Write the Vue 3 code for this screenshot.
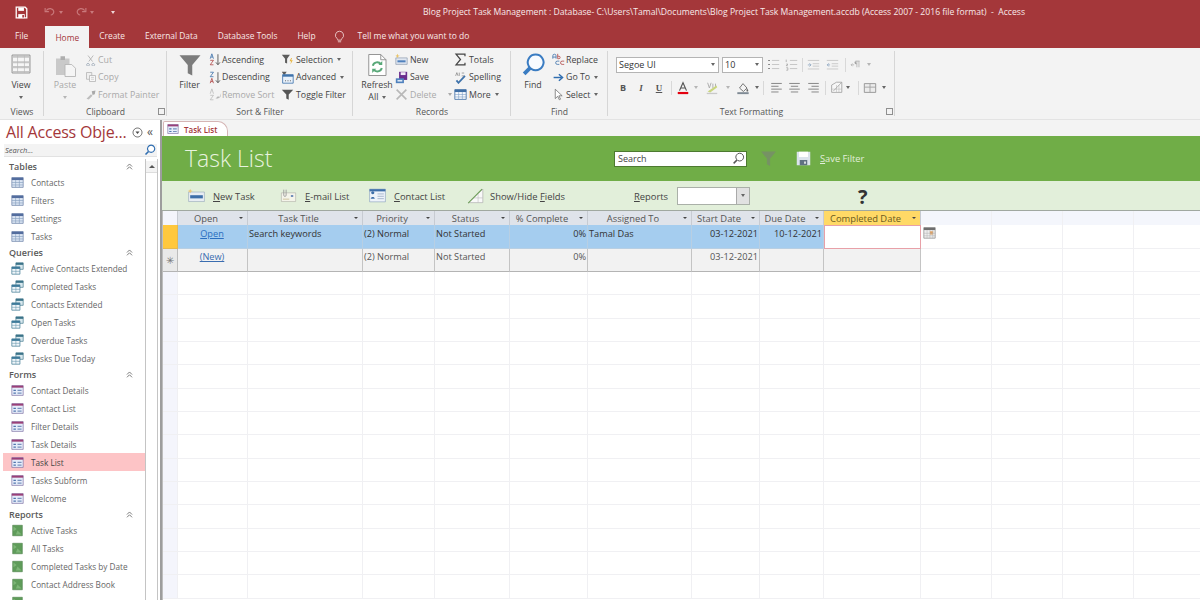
<script setup>
import { h } from 'vue'

const icons = {
  save: [['M1.5 1.5h11l2 2v11h-13z', 'none', '#fff', 1.6], ['M4 2h7v4H4z', '#fff'], ['M4 10h8v5H4z', '#fff'], ['M9 11h2v3H9z', '#a4373a']],
  undo: [['M3 6c3-4 9-3 10 1 .4 3-2 5-4 5', 'none', '#c9797b', 1.5], ['M1.5 2.5v5h5', 'none', '#c9797b', 1.5]],
  redo: [['M13 6C10 2 4 3 3 7c-.4 3 2 5 4 5', 'none', '#c9797b', 1.5], ['M14.5 2.5v5h-5', 'none', '#c9797b', 1.5]],
  bulb: [['M8 1.5a5 5 0 0 1 3 9c-.6.6-.8 1.2-.8 2H5.800c0-.8-.2-1.400-.8-2a5 5 0 0 1 3-9z', 'none', '#f4dcdc', 1], ['M6 14.500h4', 'none', '#f4dcdc', 1]],
  view: [['M1.500 1.500h13v13h-13z', '#f6f6f6', '#8a8a8a', .7], ['M2 2h12v1.500H2zM2 6h12v1.500H2zM2 9.500h12V11H2zM2 13h12v1.200H2z', '#c6c6c6'], ['M5.500 1.500v13M10.500 1.500v13', 'none', '#b8b8b8', .5]],
  paste: [['M2 3h9v11H2z', '#c9c9c9'], ['M5 1.500h3v2.500H5z', '#aeaeae'], ['M8 7h4.500L15 9.500V15H8z', '#f5f5f5', '#b5b5b5', .6]],
  cut: [['M4 2l6 8M11 2l-6 8', 'none', '#a8a8a8', 1], ['M4 12.500a1.800 1.800 0 1 0 .1 0zM11 12.500a1.800 1.800 0 1 0 .1 0z', 'none', '#9aa7b5', 1.2]],
  copy: [['M2 2h7v9H2z', '#efefef', '#b0b0b0', 1], ['M6 6h8v8H6z', '#f7f7f7', '#b0b0b0', 1], ['M8 8.500h4M8 11h4', 'none', '#c5c5c5', 1]],
  painter: [['M2 13l6-6 2 2-5 5z', '#bdbdbd'], ['M9 3l5-1-1 5-3 1z', '#a9a9a9']],
  funnel: [['M1 1.500h14L9.500 8v7l-3-1.500V8z', '#7c7c7c']],
  az: [['M1.500 7l2-6 2 6M2.300 5h2.500', 'none', '#3f73ab', 1], ['M1.500 9h4l-4 5.500h4', 'none', '#b04848', 1], ['M11 1.500V14M8.500 11.500l2.500 3 2.500-3', 'none', '#444', 1]],
  za: [['M1.500 1.500h4l-4 5.500h4', 'none', '#3f73ab', 1], ['M1.500 15l2-6 2 6M2.300 13h2.500', 'none', '#b04848', 1], ['M11 1.500V14M8.500 11.500l2.500 3 2.500-3', 'none', '#444', 1]],
  rmsort: [['M1.500 7l2-6 2 6', 'none', '#bdbdbd', 1], ['M1.500 9h4l-4 5.500h4', 'none', '#bdbdbd', 1], ['M8 13l3-3 2 1 2-5-1 5-3 2z', '#b5b5b5']],
  selection: [['M1 2h10L7.500 7v6l-2.500-1V7z', '#5c5c5c'], ['M12.500 6l-2 4h2l-1 4 3-5h-2l1-3z', '#e8b33a']],
  advanced: [['M1 1h6L5 4v3l-2-1V4z', '#5c5c5c'], ['M2 4.500h13V15H2z', '#e8f1fb', '#3f73ab', 1], ['M2 4.500h13V7H2z', '#3f73ab'], ['M5 12h1.200M8 12h1.200M11 12h1.200', 'none', '#444', 1]],
  toggle: [['M1 2h14L9.500 8v6.500l-3-1.500V8z', '#555']],
  refresh: [['M2.500 1h8l3.500 3.500V15h-11.500z', '#fff', '#8a8a8a', .6], ['M10.500 1v3.500H14', 'none', '#8a8a8a', .6], ['M5.200 8.500a3 3 0 0 1 5.400-1M11.200 10a3 3 0 0 1-5.400 1', 'none', '#58a878', 1.300], ['M11.500 5.300v2.700H9zM4.800 13.300V10.500h2.700z', '#58a878']],
  newrec: [['M1 6h14v8H1z', '#dfe6f0', '#7a8aa0', .7], ['M3 9h10v2.500H3z', '#4f81bd'], ['M3 1l1 2 2 .5-2 .8-1 2-1-2-1.500-.8L2 3z', '#e9c46a']],
  saverec: [['M5 1h10v10H5z', '#6b2d8e'], ['M7 1.500h6v3.500H7z', '#f3eaf7'], ['M1 9h10v6H1z', '#4f81bd'], ['M3 11h6v2H3z', '#dde8f5']],
  del: [['M2 2l12 12M14 2L2 14', 'none', '#b8b8b8', 2]],
  sigma: [['M13.500 4V1.500H2.500L8 8l-5.500 6.500h11V12', 'none', '#444', 1.500]],
  spell: [['M3 11.500l2.500 3L13.500 6', 'none', '#3f73ab', 2.200], ['M2 6l1.500-4 1.500 4M6.500 2v4M9.500 2.500h3M9.500 6h3', 'none', '#777', .8]],
  more: [['M1 2h14v12H1z', '#f6f9fd', '#3f6ea5', 1], ['M1 2h14v3H1z', '#3f6ea5'], ['M1 8h14M1 11h14M5.700 5v9M10.300 5v9', 'none', '#7b9cc5', .7]],
  find: [['M9.500 1a5.500 5.500 0 1 1-.01 0z', '#f8fbff', '#3a7cc2', 1.400], ['M5.500 10.500L1.500 14.500', 'none', '#3a7cc2', 2.600]],
  replace: [['M1 7V3.500a2 2 0 0 1 4 0V7M1 5h4', 'none', '#3f73ab', 1], ['M7 1v6h1.500a1.500 1.500 0 0 0 0-3H7', 'none', '#b04848', 1], ['M9 14h-2.500a2 2 0 0 1 0-4H9', 'none', '#3f73ab', 1], ['M15 14h-2.500a2 2 0 0 1 0-4H15', 'none', '#b04848', 1]],
  goto: [['M2 8h10', 'none', '#2f6db0', 1.800], ['M8.500 4l4.500 4-4.500 4', 'none', '#2f6db0', 1.800]],
  select: [['M4 1.500V13l3-2.800 2 4.300 1.500-.7-2-4.200h4z', '#fff', '#666', .9]],
  bullets: [['M1.500 3h2M1.500 8h2M1.500 13h2', 'none', '#777', 1.300], ['M6 3h9M6 8h9M6 13h9', 'none', '#bcbcbc', 1]],
  numbers: [['M1.500 2v3M1.500 7.500h2l-2 2h2M1.500 12h2v3h-2', 'none', '#8b8b8b', .7], ['M6 3h9M6 8h9M6 13h9', 'none', '#bcbcbc', 1]],
  indent: [['M1 3h14M7 7h8M7 10h8M1 13.500h14', 'none', '#c3c3c3', 1], ['M1 8.500h3.500M3 6.500l2 2-2 2', 'none', '#8aa4bf', 1]],
  outdent: [['M1 3h14M7 7h8M7 10h8M1 13.500h14', 'none', '#c3c3c3', 1], ['M5 8.500H1.500M3.500 6.500l-2 2 2 2', 'none', '#8aa4bf', 1]],
  rtl: [['M2 8.500h4M3.500 6.500l-2 2 2 2', 'none', '#a3a3a3', 1], ['M8 3h6M10 3v9M13 3v9', 'none', '#a3a3a3', 1], ['M8 3a2.200 2.200 0 0 0 2 4.500', '#a3a3a3']],
  fontcolor: [['M4 11L8 2l4 9M5.500 8h5', 'none', '#555', 1.300], ['M2 12.500h12V15H2z', '#e3000f']],
  highlight: [['M3 2l2 6 2-6M9 3v5M12 3v5', 'none', '#a8a8a8', 1], ['M3 12L13 5l1 2-8 6z', '#c9d57e'], ['M2 13.500h12V15H2z', '#c9c9c9']],
  fill: [['M4 8l4-5 4.500 5-4 4z', '#f4f4f4', '#666', 1], ['M12.500 8c1 1.500 1.500 2.500 1.500 3a1 1 0 0 1-2 0c0-.5 0-1.500.5-3z', '#666'], ['M1.500 12.800h13V15h-13z', '#7f8a94']],
  left: [['M1.500 3h13M1.500 6.500h9M1.500 10h13M1.500 13.500h9', 'none', '#707070', 1]],
  center: [['M1.500 3h13M3.500 6.500h9M1.500 10h13M3.500 13.500h9', 'none', '#707070', 1]],
  right: [['M1.500 3h13M5.500 6.500h9M1.500 10h13M5.500 13.500h9', 'none', '#707070', 1]],
  gridlines: [['M2 14V5L8 1.500h6.500V14z', '#f7f7f7', '#9f9f9f', 1], ['M2 10h12.500M8 5v9M11 5v9', 'none', '#b8b8b8', .7], ['M4 12.500L14 2', 'none', '#888', .7]],
  tbl: [['M1.500 3h13v10h-13z', '#ececec', '#8f8f8f', 1], ['M1.500 7h13M8 3v10', 'none', '#a0a0a0', 1]],
  nav: [['M8 1.500a6.500 6.500 0 1 0 .01 0z', 'none', '#4a4a4a', 1.200], ['M5 6.500h6L8 10z', '#4a4a4a']],
  chev: [['M3.500 8L8 3.500 12.500 8M3.500 13L8 8.500l4.500 4.500', 'none', '#666', 1.500]],
  tableNav: [['M1 2h14v12H1z', '#dbe5f3', '#60779f', .8], ['M1 2h14v3H1z', '#536d9e'], ['M1 8h14M1 11h14M5.700 5v9M10.300 5v9', 'none', '#88a0c0', .8]],
  query: [['M6 1h9v8H6z', '#d8e8ee', '#3a7288', .8], ['M6 1h9v2.500H6z', '#3a7288'], ['M1 6h10v9H1z', '#f0f6fa', '#2e6d8a', .8], ['M1 6h10v2.500H1z', '#3d7a9a'], ['M1 11.500h10M6 8.500v6.500', 'none', '#6a9ab0', .7]],
  form: [['M1 2h14v12H1z', '#e6edfa', '#776b9f', .8], ['M1 2h14v2.500H1z', '#9a3f78'], ['M3 7h3v1.500H3zM3 10.500h3V12H3z', '#4f74ad'], ['M8 7h5v1.500H8zM8 10.500h5V12H8z', '#7791bd']],
  report: [['M2 1.500h12v13H2z', '#5f9c5a', '#467a45', .6], ['M3 3l4 3-4 3zM8 8l5 5H6z', '#7db577']],
  newtask: [['M2 5h20v12H2z', '#e8edf3', '#8ea0b4', .7], ['M4 9h16v4H4z', '#3e6fa9'], ['M4 1l1.200 2 2 .8-2 .8L4 6.500l-1-2-2-.7 2-.8z', '#eac77a']],
  email: [['M3 6h18v11H3z', '#f4f4ea', '#a9a9a0', .7], ['M15 9h3v2h-3z', '#4f74ad'], ['M6 2v7a1.500 1.500 0 0 0 3 0V2', 'none', '#9a9a9a', 1.100], ['M5 14h8', 'none', '#c7b88c', 1]],
  contact: [['M2 2h20v16H2z', '#eef3fa', '#7e97b8', .7], ['M2 2h20v2.800H2z', '#3e6fa9'], ['M6 8.500a2 2 0 1 1 .01 0zM3.500 14c0-3 5-3 5 0z', '#3e6fa9'], ['M12 8h8M12 11h8M12 14h8', 'none', '#97aac4', 1]],
  showhide: [['M2 19L20 2v17z', '#f9f9f9', '#a8a8a8', .8], ['M8 13h12M14 8v11', 'none', '#c0c0c0', .8], ['M1.500 19.500L19 2', 'none', '#6fa05a', 1.300]],
  savefilter: [['M1 1h18v18H1z', '#dbe3ec'], ['M4 1h12v7H4z', '#fff'], ['M5 12h10v7H5z', '#5f7183'], ['M11 14h2v3h-2z', '#fff']],
  search: [['M9.500 1.500a4.800 4.800 0 1 1-.01 0z', 'none', '#555', 1.200], ['M6 10L2 14', 'none', '#555', 1.800]],
  navsearch: [['M9.500 1.500a4.800 4.800 0 1 1-.01 0z', '#fff', '#2f6db0', 1.500], ['M6 10L2 14', 'none', '#2f6db0', 2.200]],
  cal: [['M1 2h14v13H1z', '#eee', '#808080', .8], ['M1 2h14v3H1z', '#6e6e6e'], ['M8.500 6.500h4v4h-4z', '#e3a05d'], ['M1 9h14M1 12h14M5 5v10M8.500 5v10M12 5v10', 'none', '#b0b0b0', .6]],
}

const Ico = (props) =>
  h('svg', { width: props.w, height: props.h || props.w, viewBox: props.vb || '0 0 16 16', class: 'ico' },
    icons[props.n].map((p) => h('path', { d: p[0], fill: p[1], stroke: p[2] || 'none', 'stroke-width': p[3] || 0 })))
Ico.props = ['n', 'w', 'h', 'vb']

const tabs = ['Create', 'External Data', 'Database Tools', 'Help']

const sortA = [
  { i: 'az', t: 'Ascending' },
  { i: 'za', t: 'Descending' },
  { i: 'rmsort', t: 'Remove Sort', off: true },
]
const sortB = [
  { i: 'selection', t: 'Selection', c: true },
  { i: 'advanced', t: 'Advanced', c: true },
  { i: 'toggle', t: 'Toggle Filter' },
]
const clip = [
  { i: 'cut', t: 'Cut', off: true },
  { i: 'copy', t: 'Copy', off: true },
  { i: 'painter', t: 'Format Painter', off: true },
]
const recA = [
  { i: 'newrec', t: 'New' },
  { i: 'saverec', t: 'Save' },
  { i: 'del', t: 'Delete', off: true, c: true },
]
const recB = [
  { i: 'sigma', t: 'Totals' },
  { i: 'spell', t: 'Spelling' },
  { i: 'more', t: 'More', c: true },
]
const findItems = [
  { i: 'replace', t: 'Replace' },
  { i: 'goto', t: 'Go To', c: true },
  { i: 'select', t: 'Select', c: true },
]

const nav = [
  { h: 'Tables', i: 'tableNav', items: ['Contacts', 'Filters', 'Settings', 'Tasks'] },
  { h: 'Queries', i: 'query', items: ['Active Contacts Extended', 'Completed Tasks', 'Contacts Extended', 'Open Tasks', 'Overdue Tasks', 'Tasks Due Today'] },
  { h: 'Forms', i: 'form', items: ['Contact Details', 'Contact List', 'Filter Details', 'Task Details', 'Task List', 'Tasks Subform', 'Welcome'] },
  { h: 'Reports', i: 'report', items: ['Active Tasks', 'All Tasks', 'Completed Tasks by Date', 'Contact Address Book', ''] },
]

const headers = ['Open', 'Task Title', 'Priority', 'Status', '% Complete', 'Assigned To', 'Start Date', 'Due Date', 'Completed Date']
const row1 = [
  { t: 'Open', k: 'link' }, { t: 'Search keywords' }, { t: '(2) Normal' }, { t: 'Not Started' },
  { t: '0%', k: 'num' }, { t: 'Tamal Das' }, { t: '03-12-2021', k: 'num' }, { t: '10-12-2021', k: 'num' }, { t: '', k: 'editing' },
]
const row2 = [
  { t: '(New)', k: 'link' }, { t: '' }, { t: '(2) Normal' }, { t: 'Not Started' },
  { t: '0%', k: 'num' }, { t: '' }, { t: '03-12-2021', k: 'num' }, { t: '' }, { t: '' },
]
const emptyRows = 14
</script>

<template>
  <div class="app">
    <header class="titlebar">
      <div class="qat">
        <Ico n="save" :w="13" />
        <Ico n="undo" :w="12" class="q1" /><i class="caret dim" />
        <Ico n="redo" :w="12" class="q2" /><i class="caret dim" />
        <i class="caret qc" />
      </div>
      <div class="doc-title">Blog Project Task Management : Database- C:\Users\Tamal\Documents\Blog Project Task Management.accdb (Access 2007 - 2016 file format)&nbsp; -&nbsp; Access</div>
    </header>

    <nav class="tabbar">
      <span class="tab file">File</span>
      <span class="tab home">Home</span>
      <span v-for="t in tabs" :key="t" class="tab">{{ t }}</span>
      <Ico n="bulb" :w="13" class="bulb" />
      <span class="tab tell">Tell me what you want to do</span>
    </nav>

    <section class="ribbon">
      <div class="group g-views">
        <div class="gbody">
          <div class="big b-view"><Ico n="view" :w="22" /><span>View</span><i class="caret" /></div>
        </div>
        <div class="glabel">Views</div>
      </div>

      <div class="group g-clip">
        <div class="gbody">
          <div class="big b-paste off"><Ico n="paste" :w="24" /><span>Paste</span><i class="caret light" /></div>
          <div class="col c-clip">
            <div v-for="x in clip" :key="x.t" class="sm off"><Ico :n="x.i" :w="12" /><span>{{ x.t }}</span></div>
          </div>
        </div>
        <div class="glabel">Clipboard<i class="launcher" /></div>
      </div>

      <div class="group g-sort">
        <div class="gbody">
          <div class="big b-filter"><Ico n="funnel" :w="24" /><span>Filter</span></div>
          <div class="col c-sa">
            <div v-for="x in sortA" :key="x.t" class="sm" :class="{ off: x.off }"><Ico :n="x.i" :w="13" /><span>{{ x.t }}</span></div>
          </div>
          <div class="col c-sb">
            <div v-for="x in sortB" :key="x.t" class="sm"><Ico :n="x.i" :w="13" /><span>{{ x.t }}</span><i v-if="x.c" class="caret" /></div>
          </div>
        </div>
        <div class="glabel">Sort &amp; Filter</div>
      </div>

      <div class="group g-rec">
        <div class="gbody">
          <div class="big b-refresh"><Ico n="refresh" :w="24" /><span class="two">Refresh<br />All <i class="caret" /></span></div>
          <div class="col c-ra">
            <div v-for="x in recA" :key="x.t" class="sm" :class="{ off: x.off }"><Ico :n="x.i" :w="13" /><span>{{ x.t }}</span><i v-if="x.c" class="caret wide" /></div>
          </div>
          <div class="col c-rb">
            <div v-for="x in recB" :key="x.t" class="sm"><Ico :n="x.i" :w="13" /><span>{{ x.t }}</span><i v-if="x.c" class="caret" /></div>
          </div>
        </div>
        <div class="glabel">Records</div>
      </div>

      <div class="group g-find">
        <div class="gbody">
          <div class="big b-find"><Ico n="find" :w="23" /><span>Find</span></div>
          <div class="col c-find">
            <div v-for="x in findItems" :key="x.t" class="sm"><Ico :n="x.i" :w="13" /><span>{{ x.t }}</span><i v-if="x.c" class="caret" /></div>
          </div>
        </div>
        <div class="glabel">Find</div>
      </div>

      <div class="group g-text">
        <div class="gbody tf">
          <div class="tf-row r1">
            <div class="combo">Segoe UI<i class="caret" /></div>
            <div class="combo size">10<i class="caret" /></div>
            <Ico n="bullets" :w="13" class="mid" />
            <Ico n="numbers" :w="13" class="mid" />
            <i class="sep" />
            <Ico n="indent" :w="13" class="mid" />
            <Ico n="outdent" :w="13" class="mid" />
            <i class="sep" />
            <Ico n="rtl" :w="11" class="mid" />
            <i class="caret light mid" />
          </div>
          <div class="tf-row r2">
            <b class="fmt">B</b>
            <em class="fmt">I</em>
            <u class="fmt">U</u>
            <i class="sep" />
            <Ico n="fontcolor" :w="14" class="mid" />
            <i class="caret light mid" />
            <Ico n="highlight" :w="14" class="mid" />
            <i class="caret light mid" />
            <Ico n="fill" :w="14" class="mid" />
            <i class="caret mid" />
            <i class="sep" />
            <Ico n="left" :w="13" class="mid" />
            <Ico n="center" :w="13" class="mid" />
            <Ico n="right" :w="13" class="mid" />
            <i class="sep" />
            <Ico n="gridlines" :w="13" class="mid" />
            <i class="caret mid" />
            <i class="sep" />
            <Ico n="tbl" :w="14" class="mid" />
            <i class="caret mid" />
          </div>
        </div>
        <div class="glabel">Text Formatting<i class="launcher" /></div>
      </div>
    </section>

    <main class="workspace">
      <aside class="navpane">
        <div class="nav-head">
          <span class="nav-title">All Access Obje...</span>
          <Ico n="nav" :w="11" />
          <span class="collapse">«</span>
        </div>
        <div class="nav-search"><span>Search...</span><Ico n="navsearch" :w="12" /></div>
        <div class="nav-body">
          <div class="nav-list">
            <section v-for="s in nav" :key="s.h">
              <div class="nav-h"><span>{{ s.h }}</span><Ico n="chev" :w="9" /></div>
              <div v-for="(it, i) in s.items" :key="i" class="nav-item" :class="{ active: it === 'Task List' }">
                <Ico :n="s.i" :w="13" /><span>{{ it }}</span>
              </div>
            </section>
          </div>
          <div class="scroll"><div class="scroll-up"><i class="up" /></div></div>
        </div>
      </aside>

      <div class="doc">
        <div class="doctabs">
          <div class="doctab"><Ico n="form" :w="12" /><span>Task List</span></div>
        </div>
        <div class="banner">
          <h1>Task List</h1>
          <div class="searchbox"><span>Search</span><Ico n="search" :w="13" /></div>
          <Ico n="funnel" :w="17" class="dimfunnel" />
          <Ico n="savefilter" :w="15" vb="0 0 20 20" class="savef" />
          <span class="savetxt"><u>S</u>ave Filter</span>
        </div>
        <div class="toolband">
          <div class="tool t-new"><Ico n="newtask" :w="19" vb="0 0 24 20" :h="16" /><span><u>N</u>ew Task</span></div>
          <div class="tool t-mail"><Ico n="email" :w="19" vb="0 0 24 20" :h="16" /><span><u>E</u>-mail List</span></div>
          <div class="tool t-contact"><Ico n="contact" :w="19" vb="0 0 24 20" :h="17" /><span><u>C</u>ontact List</span></div>
          <div class="tool t-show"><Ico n="showhide" :w="19" vb="0 0 24 20" :h="17" /><span>Show/Hide <u>F</u>ields</span></div>
          <span class="reports"><u>R</u>eports</span>
          <div class="rcombo"><i class="rbtn"><i class="caret" /></i></div>
          <span class="help">?</span>
        </div>

        <div class="sheet">
          <div class="c sel hd corner"></div>
          <div v-for="(t, i) in headers" :key="t" class="c hd" :class="{ current: i === 8 }">
            <span class="hd-t">{{ t }}</span><i class="caret" />
          </div>
          <div v-for="n in 4" :key="'hx' + n" class="c hdx"></div>

          <div class="c sel cur"></div>
          <div v-for="(x, i) in row1" :key="'r1' + i" class="c data blue" :class="x.k">
            <span v-if="x.k === 'link'" class="lnk">{{ x.t }}</span><template v-else>{{ x.t }}</template>
          </div>
          <div class="c blank first"><Ico n="cal" :w="13" /></div>
          <div v-for="n in 3" :key="'b1' + n" class="c blank"></div>

          <div class="c sel star">✳</div>
          <div v-for="(x, i) in row2" :key="'r2' + i" class="c data newrow" :class="x.k">
            <span v-if="x.k === 'link'" class="lnk">{{ x.t }}</span><template v-else>{{ x.t }}</template>
          </div>
          <div v-for="n in 4" :key="'b2' + n" class="c blank"></div>

          <template v-for="r in emptyRows" :key="'e' + r">
            <div class="c sel faint"></div>
            <div v-for="n in 13" :key="n" class="c blank"></div>
          </template>
        </div>
      </div>
    </main>
  </div>
</template>

<style>
html, body { margin: 0; overflow: hidden; }
</style>

<style scoped>
.app { width: 1200px; height: 600px; overflow: hidden; display: flex; flex-direction: column; background: #fff; font-family: "Open Sans", "Noto Sans", sans-serif; font-size: 8.8px; color: #444; }
.ico { display: block; flex: none; }
.caret { display: inline-block; flex: none; width: 0; height: 0; border-left: 2.5px solid transparent; border-right: 2.5px solid transparent; border-top: 3px solid #666; }
.caret.light { border-top-color: #b5b5b5; }
.caret.dim { border-top-color: #c9797b; margin-left: 3px; }

.titlebar { height: 24px; flex: none; background: #a4373a; display: flex; align-items: center; color: #fff; }
.qat { width: 423px; flex: none; display: flex; align-items: center; padding-left: 15px; box-sizing: border-box; }
.q1 { margin-left: 16px; }
.q2 { margin-left: 12px; }
.qc { border-top-color: #f0d8d8; margin-left: 17px; }
.doc-title { font-size: 8.62px; white-space: nowrap; color: #f8eaea; }

.tabbar { height: 24px; flex: none; background: #a4373a; display: flex; align-items: center; padding-left: 15px; color: #f8e8e8; font-size: 8.4px; }
.tab { margin-right: 20px; line-height: 24px; white-space: nowrap; }
.tab.file { margin-right: 17px; }
.tab.home { background: #f3f3f3; color: #a4373a; width: 44px; height: 22px; line-height: 24px; text-align: center; margin-top: 2px; margin-right: 10px; }
.bulb { margin: 0 12px 0 -3px; }
.tab.tell { margin: 0; font-size: 8.5px; }

.ribbon { height: 71px; flex: none; background: #f3f3f3; border-bottom: 1px solid #e3e3e3; display: flex; color: #444; }
.group { position: relative; flex: none; display: flex; flex-direction: column; box-sizing: border-box; }
.group::after { content: ""; position: absolute; right: 0; top: 3px; bottom: 3px; width: 1px; background: #d6d6d6; }
.gbody { height: 56.5px; box-sizing: border-box; flex: none; display: flex; padding-top: 3px; }
.glabel { height: 14px; line-height: 14px; text-align: center; font-size: 8.6px; position: relative; color: #555; }
.launcher { position: absolute; right: 2px; top: 3px; width: 5px; height: 5px; border: 1px solid #8f8f8f; }
.g-views { width: 44px; }
.g-clip { width: 123px; }
.g-sort { width: 186px; }
.g-rec { width: 158px; }
.g-find { width: 97px; }
.g-text { width: 287px; }

.big { display: flex; flex-direction: column; align-items: center; flex: none; line-height: 12px; }
.big span { margin-top: 4px; }
.big .caret { margin-top: 5px; }
.b-view { width: 42px; padding-top: 2px; }
.b-paste { width: 42px; padding-top: 3px; }
.b-paste span { margin-top: 1px; }
.b-filter { width: 45px; padding-top: 2px; }
.b-filter span { margin-top: 2px; }
.b-refresh { width: 48px; padding-top: 2px; }
.b-refresh .two { margin-top: 2px; text-align: center; display: block; }
.b-refresh .two .caret { margin: 0 0 1px 1px; }
.b-find { width: 44px; padding-top: 2px; }
.b-find span { margin-top: 3px; }
.off { color: #a9a9a9; }

.col { display: flex; flex-direction: column; flex: none; }
.sm { height: 17.5px; display: flex; align-items: center; white-space: nowrap; }
.sm span { margin-left: 2px; }
.sm .caret { margin-left: 4px; }
.sm .caret.wide { margin-left: 11px; border-top-color: #aaa; }
.c-clip { margin-left: -1px; }
.c-clip .sm span { margin-left: 1px; }
.c-sa { width: 72px; margin-left: -3px; }
.c-sa .sm span { margin-left: 0; }
.c-ra { width: 59px; margin-left: -6px; }
.c-find { margin-left: -3px; }
.c-find .sm span { margin-left: 1px; }

.tf { flex-direction: column; padding: 8px 0 0 6px; }
.tf-row { display: grid; align-items: center; justify-items: center; }
.r1 { height: 17px; grid-template-columns: 103px 3px 41px 20px 16px 7px 14px 24px 2px 18px 10px; padding-left: 2px; }
.r2 { height: 17px; margin-top: 6px; grid-template-columns: 18px 18px 18px 7px 16px 9px 24px 8px 22px 6px 7px 18px 19px 18px 7px 14px 10px 10px 14px 14px; }
.combo { grid-column: 1; width: 103px; height: 16px; box-sizing: border-box; background: #fff; border: 1px solid #b4b4b4; display: flex; align-items: center; justify-content: space-between; padding: 0 3px 0 2px; font-size: 9px; color: #333; }
.combo.size { grid-column: 3; width: 41px; }
.r1 > .mid:nth-of-type(1) { grid-column: 4; }
.sep { width: 1px; height: 14px; background: #d8d8d8; }
.fmt { font-size: 9px; font-style: normal; color: #555; font-family: "Liberation Serif", serif; font-weight: 700; }
b.fmt { font-family: "Open Sans", sans-serif; }
em.fmt { font-style: italic; }

.workspace { flex: 1; min-height: 0; display: flex; }
.navpane { width: 160px; flex: none; border-right: 2px solid #9d9d9d; background: #fff; display: flex; flex-direction: column; box-sizing: content-box; }
.nav-head { height: 24px; flex: none; display: flex; align-items: center; padding-left: 6px; }
.nav-title { font-size: 16px; color: #a4373a; width: 126px; white-space: nowrap; font-family: "Open Sans", sans-serif; letter-spacing: -.2px; }
.collapse { margin-left: 4px; font-size: 12px; color: #555; line-height: 12px; }
.nav-search { height: 13px; flex: none; margin-left: 4px; width: 153px; box-sizing: border-box; border-bottom: 1px solid #e2e2e2; background: #f3f3f3; display: flex; align-items: center; justify-content: space-between; font-style: italic; font-size: 7.5px; color: #555; padding: 0 1px; }
.nav-body { flex: 1; min-height: 0; display: flex; padding-top: 2px; }
.nav-list { width: 146px; flex: none; overflow: hidden; box-sizing: border-box; padding-left: 3px; border-right: 1px solid #c4c4c4; }
.nav-h { height: 14px; display: flex; justify-content: space-between; align-items: center; font-weight: 600; font-size: 9px; color: #5a5a5a; padding: 0 8px 0 6px; width: 139px; box-sizing: border-box; }
.nav-item { height: 18px; display: flex; align-items: center; padding-left: 8px; width: 142px; box-sizing: border-box; font-size: 8.2px; color: #666; white-space: nowrap; }
.nav-item span { margin-left: 7px; }
.nav-item.active { background: #fdc4c6; color: #444; }
.scroll { width: 11px; flex: none; border-right: 1px solid #c4c4c4; background: #fff; padding-top: 2px; box-sizing: content-box; }
.scroll-up { height: 11px; background: #f3f3f3; border-bottom: 1px solid #ddd; display: flex; align-items: center; justify-content: center; }
.up { width: 0; height: 0; border-left: 3px solid transparent; border-right: 3px solid transparent; border-bottom: 3px solid #555; }

.doc { flex: 1; min-width: 0; display: flex; flex-direction: column; }
.doctabs { height: 16px; flex: none; background: #f3f3f3; display: flex; align-items: flex-end; padding-left: 1px; }
.doctab { height: 15px; width: 65px; box-sizing: border-box; display: flex; align-items: center; padding-left: 3px; background: #fff; border: 1px solid #d5b5b5; border-bottom: 0; border-radius: 2px 10px 0 0; font-size: 8px; font-weight: 600; color: #a4373a; }
.doctab span { margin-left: 5px; }
.banner { height: 45px; flex: none; background: #70ad47; display: flex; align-items: center; color: #e2efda; }
.banner h1 { margin: 0 0 0 23px; width: 429px; font-weight: 300; font-size: 23px; line-height: 45px; font-family: "Open Sans", sans-serif; color: #e8f3df; }
.searchbox { width: 133px; height: 16px; box-sizing: border-box; background: #fff; border: 1px solid #4d7a30; display: flex; align-items: center; justify-content: space-between; padding: 0 1px 0 3px; font-size: 9px; color: #444; }
.dimfunnel { margin-left: 13px; opacity: .55; }
.savef { margin-left: 19px; }
.savetxt { margin-left: 9px; font-size: 9.3px; }
.toolband { height: 29px; flex: none; background: #e2efda; border-bottom: 1px solid #a0a8a0; box-sizing: content-box; display: flex; align-items: center; font-size: 9.4px; color: #444; }
.tool { display: flex; align-items: center; flex: none; }
.tool span { margin: 2px 0 0 7px; }
.t-new { margin-left: 25px; width: 92px; }
.t-mail { width: 89px; }
.t-contact { width: 99px; }
.t-show { width: 167px; }
.t-show span { margin-left: 4px; }
.reports { width: 43px; flex: none; margin-top: 2px; }
.rcombo { width: 73px; height: 18px; flex: none; box-sizing: border-box; background: #fff; border: 1px solid #aab0a8; display: flex; justify-content: flex-end; }
.rbtn { width: 12px; background: #e1e1e1; border-left: 1px solid #aaa; display: flex; align-items: center; justify-content: center; }
.help { margin-left: 108px; margin-top: 2px; font-size: 20px; font-weight: 700; color: #333; line-height: 24px; font-family: "Open Sans", sans-serif; }

.sheet { flex: 1; min-height: 0; overflow: hidden; display: grid; grid-template-columns: 15px 70px 115px 72px 75px 78px 104px 68px 64px 97px 71px 71px 71px 67px; grid-template-rows: 14px 24px 23px; grid-auto-rows: 23.34px; font-size: 9.2px; color: #444; border-left: 1px solid #bdbdbd; }
.c { box-sizing: border-box; border-right: 1px solid #f0f0f3; border-bottom: 1px solid #f0f0f3; white-space: nowrap; overflow: hidden; min-width: 0; }
.hd { background: #dfe3ea; border-right: 1px solid #c7cbd2; border-bottom: 0; display: flex; align-items: center; padding: 0 4px; color: #555; font-size: 9.4px; }
.hd-t { flex: 1; text-align: center; padding-right: 9px; }
.hd .caret { border-top-color: #444; border-left-width: 2px; border-right-width: 2px; border-top-width: 2.5px; }
.hd.current { background: #ffd966; color: #6a5a20; }
.hdx { background: #f4f6fc; border-bottom: 0; }
.corner { background: #e4e6ec; }
.sel { background: #f4f5fc; }
.sel.cur { background: #ffc83d; border-color: #e5b950; }
.sel.star { background: #e9e9e9; color: #777; text-align: center; font-size: 10px; line-height: 22px; border-right: 1px solid #bcbcbc; border-bottom: 1px solid #b4b4b4; }
.data { line-height: 16px; padding: 1px 1px 0; }
.blue { background: #a5cdef; border-color: #b8cfe3; color: #333; }
.newrow { background: #f2f2f2; border-right: 1px solid #c4c4c4; border-bottom: 1px solid #b4b4b4; color: #555; padding-top: 0; }
.num { text-align: right; padding-right: 1px; }
.link { text-align: center; padding-right: 2px; }
.lnk { color: #2a6fc0; text-decoration: underline; }
.newrow .lnk { color: #3a6db0; }
.editing { background: #fff; border: 1px solid #e8a0a8; }
.blank { background: #fff; }
.blank.first { padding: 1px 0 0 2px; }
</style>
